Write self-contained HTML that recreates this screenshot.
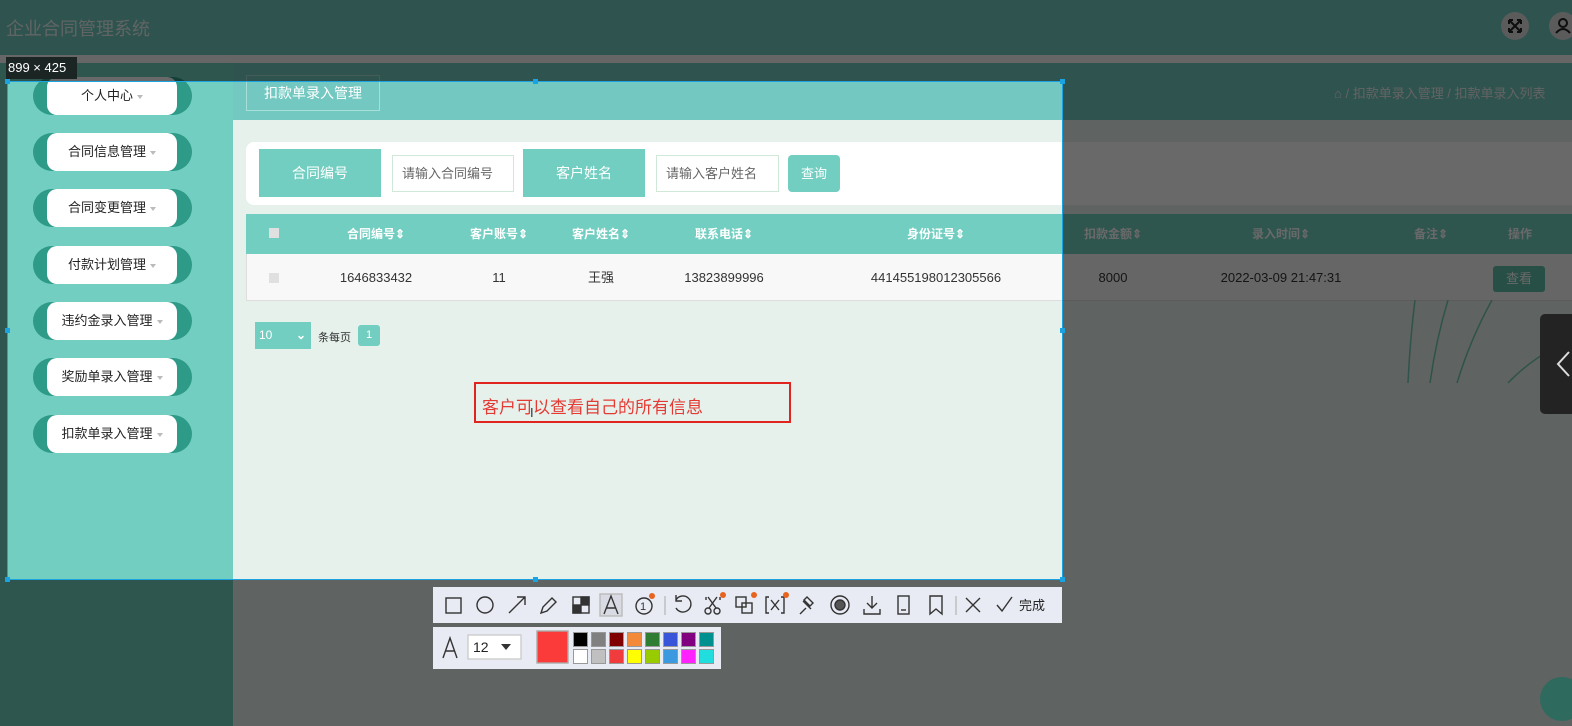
<!DOCTYPE html>
<html><head><meta charset="utf-8"><style>
*{margin:0;padding:0;box-sizing:border-box}
body{width:1572px;height:726px;position:relative;overflow:hidden;font-family:"Liberation Sans","Noto Sans CJK SC",sans-serif;background:#e6f1ec}
.a{position:absolute}
.pill{position:absolute;left:33px;width:159px;height:38px;background:#2e9a88;border-radius:19px}
.pill .w{position:absolute;left:14px;width:130px;top:0;height:38px;background:#fff;border-radius:10px;font-size:13px;color:#222;text-align:center;line-height:38px}
.pill .w i{display:inline-block;width:0;height:0;border-left:3px solid transparent;border-right:3px solid transparent;border-top:4px solid #bbb;margin-left:4px;vertical-align:middle}
.th{position:absolute;top:214px;height:40px;line-height:40px;color:#fff;font-size:12px;font-weight:bold;transform:translateX(-50%);white-space:nowrap}
.td{position:absolute;top:254px;height:47px;line-height:47px;color:#333;font-size:13px;transform:translateX(-50%);white-space:nowrap}
.sw{position:absolute;width:15px;height:15px;border:1px solid #999}
</style></head><body>
<div class="a" style="left:0;top:0;width:1572px;height:55px;background:#73c9c1"></div>
<div class="a" style="left:6px;top:15px;font-size:18px;color:#e8f4f2">企业合同管理系统</div>
<div class="a" style="left:1501px;top:12px;width:28px;height:28px;border-radius:50%;background:#dcdcdc"></div>
<div class="a" style="left:1549px;top:12px;width:28px;height:28px;border-radius:50%;background:#dcdcdc"></div>
<svg class="a" style="left:1501px;top:12px" width="71" height="28" fill="none" stroke="#222" stroke-width="2">
<path d="M8 8 L20 20 M20 8 L8 20 M8 8 h4 M8 8 v4 M20 8 h-4 M20 8 v4 M8 20 h4 M8 20 v-4 M20 20 h-4 M20 20 v-4"/>
<circle cx="62" cy="11" r="4"/><path d="M55 21 q7-8 14 0"/>
</svg>
<div class="a" style="left:0;top:55px;width:1572px;height:8px;background:#f4f8f4"></div>
<div class="a" style="left:0;top:63px;width:1572px;height:57px;background:#73c9c1"></div>
<div class="a" style="left:0;top:63px;width:233px;height:663px;background:#72cec0"></div>
<div class="a" style="left:246px;top:75px;width:134px;height:36px;border:1px solid #a8e0d8;color:#fff;font-size:14px;line-height:34px;text-align:center">扣款单录入管理</div>
<div class="a" style="left:1334px;top:83px;font-size:13px;color:#f0f0f0">⌂ / 扣款单录入管理 / 扣款单录入列表</div>
<div class="pill" style="top:77px"><div class="w">个人中心<i></i></div></div>
<div class="pill" style="top:133px"><div class="w">合同信息管理<i></i></div></div>
<div class="pill" style="top:189px"><div class="w">合同变更管理<i></i></div></div>
<div class="pill" style="top:246px"><div class="w">付款计划管理<i></i></div></div>
<div class="pill" style="top:302px"><div class="w">违约金录入管理<i></i></div></div>
<div class="pill" style="top:358px"><div class="w">奖励单录入管理<i></i></div></div>
<div class="pill" style="top:415px"><div class="w">扣款单录入管理<i></i></div></div>
<div class="a" style="left:246px;top:142px;width:1340px;height:63px;background:#fff;border-radius:8px"></div>
<div class="a" style="left:259px;top:149px;width:122px;height:48px;background:#72cec0;color:#fff;font-size:14px;line-height:48px;text-align:center">合同编号</div>
<div class="a" style="left:392px;top:155px;width:122px;height:37px;border:1px solid #cfe8d8;background:#fff;color:#666;font-size:13px;line-height:35px;padding-left:9px">请输入合同编号</div>
<div class="a" style="left:523px;top:149px;width:122px;height:48px;background:#72cec0;color:#fff;font-size:14px;line-height:48px;text-align:center">客户姓名</div>
<div class="a" style="left:656px;top:155px;width:123px;height:37px;border:1px solid #cfe8d8;background:#fff;color:#666;font-size:13px;line-height:35px;padding-left:9px">请输入客户姓名</div>
<div class="a" style="left:788px;top:155px;width:52px;height:37px;background:#72cec0;border-radius:4px;color:#fff;font-size:13px;line-height:37px;text-align:center">查询</div>
<div class="a" style="left:246px;top:214px;width:1340px;height:40px;background:#72cec0"></div>
<div class="a" style="left:246px;top:254px;width:1340px;height:47px;background:#f8f8f8;border-bottom:1px solid #ddd;border-left:1px solid #ddd"></div>
<div class="a" style="left:269px;top:228px;width:10px;height:10px;background:#e0e0e0"></div>
<div class="a" style="left:269px;top:273px;width:10px;height:10px;background:#e0e0e0"></div>
<div class="th" style="left:376px">合同编号⇕</div><div class="th" style="left:499px">客户账号⇕</div><div class="th" style="left:601px">客户姓名⇕</div><div class="th" style="left:724px">联系电话⇕</div><div class="th" style="left:936px">身份证号⇕</div><div class="th" style="left:1113px">扣款金额⇕</div><div class="th" style="left:1281px">录入时间⇕</div><div class="th" style="left:1431px">备注⇕</div><div class="th" style="left:1520px">操作</div>
<div class="td" style="left:376px">1646833432</div><div class="td" style="left:499px">11</div><div class="td" style="left:601px">王强</div><div class="td" style="left:724px">13823899996</div><div class="td" style="left:936px">441455198012305566</div><div class="td" style="left:1113px">8000</div><div class="td" style="left:1281px">2022-03-09 21:47:31</div>
<div class="a" style="left:1493px;top:266px;width:52px;height:26px;background:#5fbfa7;border-radius:3px;color:#fff;font-size:13px;line-height:26px;text-align:center">查看</div>
<svg class="a" style="left:1380px;top:300px" width="192" height="100" fill="none" stroke="#73c9b5" stroke-width="1.5">
<path d="M35 0 Q30 40 28 83 M68 0 Q56 40 50 83 M112 0 Q90 40 77 83 M170 50 Q145 65 128 83"/>
</svg>
<div class="a" style="left:255px;top:322px;width:56px;height:27px;background:#72cec0;color:#fff;font-size:12px;line-height:27px;padding-left:4px">10 <span style="position:absolute;right:5px;font-weight:bold">⌄</span></div>
<div class="a" style="left:318px;top:329px;font-size:11px;color:#333">条每页</div>
<div class="a" style="left:358px;top:325px;width:22px;height:21px;background:#72cec0;border-radius:3px;color:#fff;font-size:11px;line-height:21px;text-align:center">1</div>
<div class="a" style="left:0;top:0;width:1572px;height:82px;background:rgba(0,0,0,.59)"></div>
<div class="a" style="left:0;top:580px;width:1572px;height:146px;background:rgba(0,0,0,.59)"></div>
<div class="a" style="left:0;top:82px;width:8px;height:498px;background:rgba(0,0,0,.59)"></div>
<div class="a" style="left:1063px;top:82px;width:509px;height:498px;background:rgba(0,0,0,.59)"></div>
<div class="a" style="left:1540px;top:314px;width:40px;height:100px;background:#232323;border-radius:5px"></div>
<svg class="a" style="left:1555px;top:350px" width="17" height="28" fill="none" stroke="#ddd" stroke-width="2"><path d="M14 2 L3 14 L14 26"/></svg>
<div class="a" style="left:1540px;top:677px;width:44px;height:44px;border-radius:50%;background:#2f6a5e"></div>
<div class="a" style="left:7px;top:81px;width:1056px;height:499px;border:1px solid #1aa3e0"></div>
<div class="a" style="left:5px;top:79px;width:5px;height:5px;background:#1aa3e0"></div>
<div class="a" style="left:533px;top:79px;width:5px;height:5px;background:#1aa3e0"></div>
<div class="a" style="left:1060px;top:79px;width:5px;height:5px;background:#1aa3e0"></div>
<div class="a" style="left:5px;top:328px;width:5px;height:5px;background:#1aa3e0"></div>
<div class="a" style="left:1060px;top:328px;width:5px;height:5px;background:#1aa3e0"></div>
<div class="a" style="left:5px;top:577px;width:5px;height:5px;background:#1aa3e0"></div>
<div class="a" style="left:533px;top:577px;width:5px;height:5px;background:#1aa3e0"></div>
<div class="a" style="left:1060px;top:577px;width:5px;height:5px;background:#1aa3e0"></div>
<div class="a" style="left:6px;top:57px;width:71px;height:22px;background:#1b2524;color:#fff;font-size:13px;line-height:22px;padding-left:2px">899 × 425</div>
<div class="a" style="left:474px;top:382px;width:317px;height:41px;border:2px solid #e0251f"></div>
<div class="a" style="left:482px;top:393px;font-size:17px;color:#e53a34">客户可以查看自己的所有信息</div>
<div class="a" style="left:530px;top:405px;font-size:13px;color:#333">I</div>
<div class="a" style="left:433px;top:587px;width:629px;height:36px;background:#e8ebf3"></div>
<div class="a" style="left:433px;top:627px;width:288px;height:42px;background:#e8ebf3"></div>
<svg class="a" style="left:433px;top:587px" width="629" height="36" fill="none" stroke="#333" stroke-width="1.4">
<rect x="13" y="11" width="15" height="15"/>
<circle cx="52" cy="18" r="8"/>
<path d="M76 26 L92 10 M84 10 H92 V18"/>
<path d="M108 26 l2-6 9-9 4 4-9 9z"/>
<rect x="140" y="10" width="16" height="16"/><rect x="148" y="10" width="8" height="8" fill="#333"/><rect x="140" y="18" width="8" height="8" fill="#333"/>
<rect x="167" y="7" width="22" height="22" fill="#d8dbe3" stroke="#bbb"/><path d="M171 27 L178 9 L185 27 M173.5 21 H182.5"/>
<circle cx="211" cy="19" r="8"/><text x="207" y="23" font-size="11" fill="#333" stroke="none">1</text><circle cx="219" cy="9" r="3" fill="#e8641e" stroke="none"/>
<path d="M232 9 V28" stroke="#bbb"/>
<path d="M243 13 a8 8 0 1 1 0 8 M243 8 v6 h6"/>
<circle cx="275" cy="24" r="3"/><circle cx="284" cy="24" r="3"/><path d="M276 21 L284 10 M283 21 L275 10 M273 10 V13 M287 10 V13"/><circle cx="290" cy="8" r="3" fill="#e8641e" stroke="none"/>
<rect x="303" y="10" width="10" height="10"/><rect x="309" y="16" width="10" height="10"/><circle cx="321" cy="8" r="3" fill="#e8641e" stroke="none"/>
<path d="M336 10 h-3 v16 h3 M348 10 h3 v16 h-3 M338 13 l8 10 M346 13 l-8 10"/><circle cx="353" cy="8" r="3" fill="#e8641e" stroke="none"/>
<path d="M367 27 l6-6 M370 14 l8 8 M374 10 l6 6 -3 3 -6-6z"/>
<circle cx="407" cy="18" r="9"/><circle cx="407" cy="18" r="5" fill="#555"/>
<path d="M439 9 v12 M434 16 l5 5 5-5 M431 22 v5 h16 v-5"/>
<rect x="465" y="9" width="11" height="18"/><path d="M468 23 h5"/>
<path d="M497 9 h12 v18 l-6-5 -6 5z"/>
<path d="M523 9 V28" stroke="#bbb"/>
<path d="M533 11 l14 14 M547 11 l-14 14"/>
<path d="M564 18 l5 6 10-14"/>
<text x="586" y="23" font-size="13" fill="#222" stroke="none" font-family="Noto Sans CJK SC">完成</text>
</svg>
<svg class="a" style="left:433px;top:627px" width="288" height="42" fill="none" stroke="#333" stroke-width="1.4">
<path d="M10 31 L17 11 L24 31 M12.5 24 H21.5"/>
<rect x="35" y="8" width="53" height="24" fill="#fff" stroke="#ccc"/>
<text x="40" y="25" font-size="14" fill="#222" stroke="none" font-family="Liberation Sans">12</text>
<path d="M68 17 h10 l-5 6z" fill="#333" stroke="none"/>
<rect x="104" y="4" width="31" height="32" fill="#fb3a3a" stroke="#aaa"/>
</svg>
<div class="sw" style="left:573px;top:632px;background:#000"></div><div class="sw" style="left:591px;top:632px;background:#808080"></div><div class="sw" style="left:609px;top:632px;background:#800000"></div><div class="sw" style="left:627px;top:632px;background:#f28a3a"></div><div class="sw" style="left:645px;top:632px;background:#2e7d32"></div><div class="sw" style="left:663px;top:632px;background:#3854d8"></div><div class="sw" style="left:681px;top:632px;background:#800080"></div><div class="sw" style="left:699px;top:632px;background:#009090"></div>
<div class="sw" style="left:573px;top:649px;background:#fff"></div><div class="sw" style="left:591px;top:649px;background:#c0c0c0"></div><div class="sw" style="left:609px;top:649px;background:#f03c3c"></div><div class="sw" style="left:627px;top:649px;background:#ffff00"></div><div class="sw" style="left:645px;top:649px;background:#99cc00"></div><div class="sw" style="left:663px;top:649px;background:#3b99e0"></div><div class="sw" style="left:681px;top:649px;background:#ff22ff"></div><div class="sw" style="left:699px;top:649px;background:#22dddd"></div>
</body></html>
